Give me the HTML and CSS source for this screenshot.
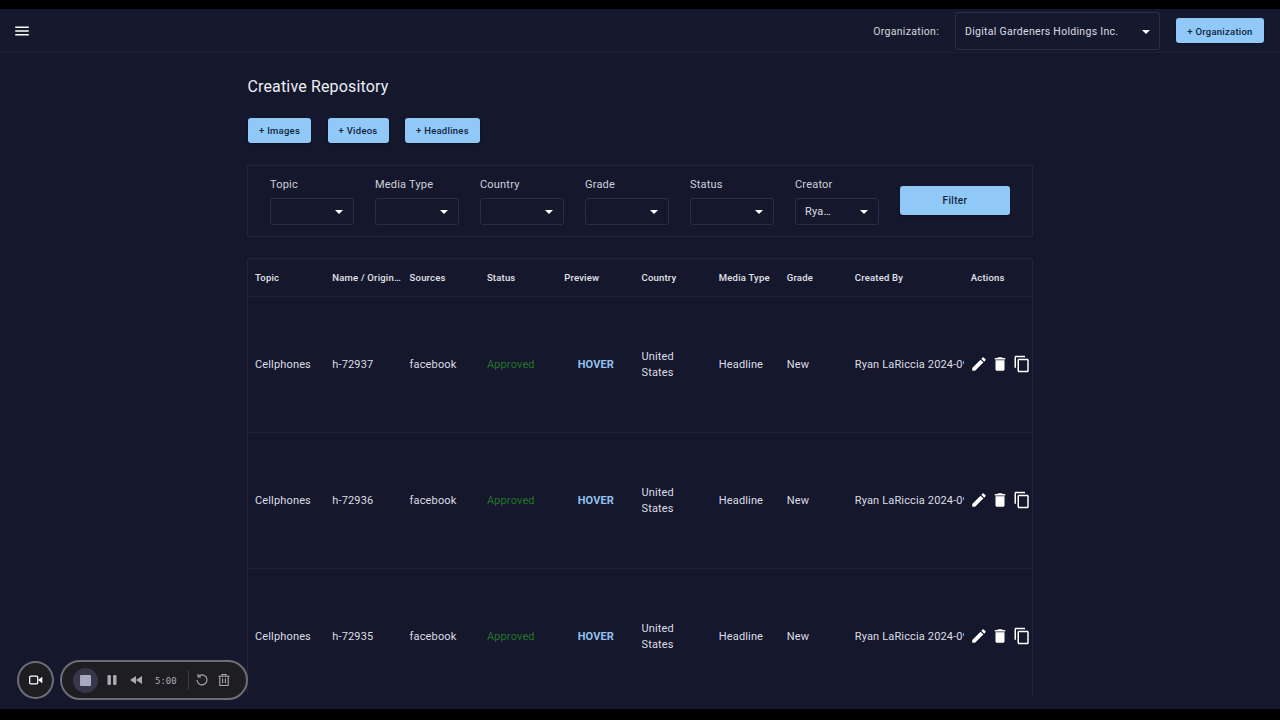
FILE: index.html
```html
<!DOCTYPE html>
<html lang="en">
<head>
<meta charset="utf-8">
<title>Creative Repository</title>
<link rel="stylesheet" href="styles.css">
</head>
<body>
<div class="screen">
  <header class="topbar">
    <svg class="menu-icon" viewBox="0 0 24 24" width="18" height="18"><path d="M3 18h18v-2H3v2zm0-5h18v-2H3v2zm0-7v2h18V6H3z"/></svg>
    <div class="org">
      <span class="org-label">Organization:</span>
      <div class="org-select"><span>Digital Gardeners Holdings Inc.</span><i class="caret"></i></div>
      <button class="btn btn-org">+ Organization</button>
    </div>
  </header>
  <main class="content">
    <h1 class="title">Creative Repository</h1>
    <div class="actions-row">
      <button class="btn btn-add">+ Images</button>
      <button class="btn btn-add">+ Videos</button>
      <button class="btn btn-add">+ Headlines</button>
    </div>
    <section class="filters">
      <div class="field"><label>Topic</label><div class="select"><span></span><i class="caret"></i></div></div>
      <div class="field"><label>Media Type</label><div class="select"><span></span><i class="caret"></i></div></div>
      <div class="field"><label>Country</label><div class="select"><span></span><i class="caret"></i></div></div>
      <div class="field"><label>Grade</label><div class="select"><span></span><i class="caret"></i></div></div>
      <div class="field"><label>Status</label><div class="select"><span></span><i class="caret"></i></div></div>
      <div class="field"><label>Creator</label><div class="select"><span>Rya…</span><i class="caret"></i></div></div>
      <button class="btn btn-filter">Filter</button>
    </section>
    <section class="table-wrap">
      <table class="grid">
        <colgroup>
          <col class="c-std"><col class="c-std"><col class="c-std"><col class="c-std"><col class="c-std"><col class="c-std">
          <col class="c-mid"><col class="c-mid"><col class="c-wide"><col class="c-act">
        </colgroup>
        <thead>
          <tr><th>Topic</th><th>Name / Origin…</th><th>Sources</th><th>Status</th><th>Preview</th><th>Country</th><th>Media Type</th><th>Grade</th><th>Created By</th><th>Actions</th></tr>
        </thead>
        <tbody>
          <tr>
            <td>Cellphones</td><td>h-72937</td><td>facebook</td><td class="ok">Approved</td><td class="hover">HOVER</td><td>United States</td><td>Headline</td><td>New</td><td class="clip"><div>Ryan LaRiccia 2024-09-12</div></td>
            <td class="act"><div class="icons">
              <svg viewBox="0 0 24 24"><path d="M3 17.25V21h3.75L17.81 9.94l-3.75-3.75L3 17.25zM20.71 7.04a1 1 0 0 0 0-1.41l-2.34-2.34a1 1 0 0 0-1.41 0l-1.83 1.83 3.75 3.75 1.83-1.83z"/></svg>
              <svg viewBox="0 0 24 24"><path d="M6 19c0 1.1.9 2 2 2h8c1.1 0 2-.9 2-2V7H6v12zM19 4h-3.5l-1-1h-5l-1 1H5v2h14V4z"/></svg>
              <svg viewBox="0 0 24 24"><path d="M16 1H4c-1.1 0-2 .9-2 2v14h2V3h12V1zm3 4H8c-1.1 0-2 .9-2 2v14c0 1.1.9 2 2 2h11c1.1 0 2-.9 2-2V7c0-1.1-.9-2-2-2zm0 16H8V7h11v14z"/></svg>
            </div></td>
          </tr>
          <tr>
            <td>Cellphones</td><td>h-72936</td><td>facebook</td><td class="ok">Approved</td><td class="hover">HOVER</td><td>United States</td><td>Headline</td><td>New</td><td class="clip"><div>Ryan LaRiccia 2024-09-12</div></td>
            <td class="act"><div class="icons">
              <svg viewBox="0 0 24 24"><path d="M3 17.25V21h3.75L17.81 9.94l-3.75-3.75L3 17.25zM20.71 7.04a1 1 0 0 0 0-1.41l-2.34-2.34a1 1 0 0 0-1.41 0l-1.83 1.83 3.75 3.75 1.83-1.83z"/></svg>
              <svg viewBox="0 0 24 24"><path d="M6 19c0 1.1.9 2 2 2h8c1.1 0 2-.9 2-2V7H6v12zM19 4h-3.5l-1-1h-5l-1 1H5v2h14V4z"/></svg>
              <svg viewBox="0 0 24 24"><path d="M16 1H4c-1.1 0-2 .9-2 2v14h2V3h12V1zm3 4H8c-1.1 0-2 .9-2 2v14c0 1.1.9 2 2 2h11c1.1 0 2-.9 2-2V7c0-1.1-.9-2-2-2zm0 16H8V7h11v14z"/></svg>
            </div></td>
          </tr>
          <tr>
            <td>Cellphones</td><td>h-72935</td><td>facebook</td><td class="ok">Approved</td><td class="hover">HOVER</td><td>United States</td><td>Headline</td><td>New</td><td class="clip"><div>Ryan LaRiccia 2024-09-12</div></td>
            <td class="act"><div class="icons">
              <svg viewBox="0 0 24 24"><path d="M3 17.25V21h3.75L17.81 9.94l-3.75-3.75L3 17.25zM20.71 7.04a1 1 0 0 0 0-1.41l-2.34-2.34a1 1 0 0 0-1.41 0l-1.83 1.83 3.75 3.75 1.83-1.83z"/></svg>
              <svg viewBox="0 0 24 24"><path d="M6 19c0 1.1.9 2 2 2h8c1.1 0 2-.9 2-2V7H6v12zM19 4h-3.5l-1-1h-5l-1 1H5v2h14V4z"/></svg>
              <svg viewBox="0 0 24 24"><path d="M16 1H4c-1.1 0-2 .9-2 2v14h2V3h12V1zm3 4H8c-1.1 0-2 .9-2 2v14c0 1.1.9 2 2 2h11c1.1 0 2-.9 2-2V7c0-1.1-.9-2-2-2zm0 16H8V7h11v14z"/></svg>
            </div></td>
          </tr>
        </tbody>
      </table>
    </section>
  </main>
  <div class="recorder">
    <div class="cam">
      <svg viewBox="0 0 20 14" width="14" height="10"><rect x="1" y="1.5" width="11.5" height="11" rx="1.5" fill="none" stroke="#fff" stroke-width="1.8"/><path d="M13 7l6-4.5v9z" fill="#fff"/></svg>
    </div>
    <div class="pill">
      <div class="stop"><span></span></div>
      <svg class="rec-i" viewBox="0 0 12 12" width="12" height="12"><rect x="1.5" y="1" width="3.4" height="10" rx="1.2"/><rect x="7.1" y="1" width="3.4" height="10" rx="1.2"/></svg>
      <svg class="rec-i rew" viewBox="0 0 14 12" width="14" height="12"><path d="M7 2v8L1 6zM13 2v8L7 6z"/></svg>
      <span class="time">5:00</span>
      <span class="sep"></span>
      <svg class="rec-o" viewBox="0 0 14 14" width="14" height="14"><path d="M3.2 3.6A5 5 0 1 1 2 7"/><path d="M3 1v3h3"/></svg>
      <svg class="rec-o" viewBox="0 0 14 14" width="14" height="14"><path d="M1.5 3.2h11M5 3V1.5h4V3M2.8 3.2v9.3h8.4V3.2M5.6 5.5v4.8M8.4 5.5v4.8"/></svg>
    </div>
  </div>
</div>
</body>
</html>
```

FILE: styles.css
```css
* { box-sizing: border-box; }
html, body { margin: 0; height: 100%; background: #000; overflow: hidden; }
body { padding: 9px 0 11px; font-family: Roboto, "Liberation Sans", sans-serif; color: #e8e9ee; }
.screen { position: relative; height: 700px; background: #15182d; display: flex; flex-direction: column; overflow: hidden; }

.topbar { height: 44px; flex: none; display: flex; align-items: center; justify-content: space-between; padding: 0 16px 0 13px; border-bottom: 1px solid #1c2034; background: #15192e; }
.menu-icon { fill: #fff; }
.org { display: flex; align-items: center; }
.org-label { font-size: 10.5px; letter-spacing: .3px; color: #d5d6dd; margin-right: 16px; padding-top: 2px; }
.org-select { width: 205px; height: 38px; border: 1px solid #2a2e44; border-radius: 3px; display: flex; align-items: center; justify-content: space-between; padding: 2px 9px 0; font-size: 10.5px; letter-spacing: .3px; color: #dcdde3; margin-right: 16px; }
.caret { display: block; width: 0; height: 0; border-left: 4px solid transparent; border-right: 4px solid transparent; border-top: 4px solid #fff; }

.btn { border: 0; border-radius: 3px; background: #90c8f8; color: #12233c; font-family: inherit; font-weight: 500; font-size: 9.5px; letter-spacing: .25px; padding: 0; box-shadow: 0 1px 2px rgba(0,0,0,.4); }
.btn-org { width: 88px; height: 25px; padding-top: 1px; }

.content { flex: 1; min-height: 0; display: flex; flex-direction: column; width: 786px; margin-left: 247px; }
.title { margin: 24px 0 0 .5px; font-size: 16px; line-height: 20px; font-weight: 400; letter-spacing: .15px; color: #eceef3; }
.actions-row { display: flex; gap: 16.5px; margin-top: 21px; margin-left: 1px; }
.btn-add { height: 25px; padding: 0 11px; }

.filters { margin-top: 22px; height: 72px; flex: none; border: 1px solid #22263b; display: flex; padding: 0 22px; gap: 21px; }
.field { width: 84px; padding-top: 12px; }
.field label { display: block; font-size: 11px; line-height: 14px; letter-spacing: .2px; color: #cfd0d9; margin-bottom: 6px; }
.select { height: 27px; border: 1px solid #2a2e44; border-radius: 3px; display: flex; align-items: center; justify-content: space-between; padding: 0 10px 0 9px; font-size: 11px; letter-spacing: .2px; color: #dcdde3; }
.btn-filter { width: 110px; height: 29px; align-self: flex-start; margin-top: 20px; font-size: 10px; letter-spacing: .35px; }

.table-wrap { margin-top: 21px; flex: 1; min-height: 0; overflow: hidden; border: 1px solid #22263b; border-bottom: 0; border-radius: 3px 3px 0 0; margin-bottom: 14px; }
.grid { width: 784px; border-collapse: collapse; table-layout: fixed; }
.c-std { width: 77.3px; }
.c-mid { width: 68px; }
.c-wide { width: 116px; }
.grid th { height: 37px; padding: 1px 7px 0; text-align: left; font-size: 9.5px; font-weight: 500; letter-spacing: .2px; color: #e2e3ea; border-bottom: 1px solid #1f2338; white-space: nowrap; overflow: hidden; }
.grid td { height: 136px; padding: 1px 7px 0; font-size: 11px; line-height: 16px; letter-spacing: .15px; color: #dcdde4; border-bottom: 1px solid #1f2338; }
.grid td.ok { color: #217329; }
.grid td.hover { color: #90c0ee; font-weight: 700; text-align: center; }
.grid td.clip { padding-right: 0; }
.clip div { white-space: nowrap; overflow: hidden; }
.grid td.act { padding: 0; }
.icons { display: flex; gap: 3.5px; padding-left: 6px; }
.icons svg { width: 18px; height: 18px; fill: #fff; flex: none; }

.recorder { position: absolute; left: 17px; top: 651px; display: flex; align-items: center; gap: 6px; }
.cam { width: 37px; height: 38px; border-radius: 50%; border: 2.5px solid #6d6d78; background: #1e1e22; display: flex; align-items: center; justify-content: center; }
.pill { width: 188px; height: 40px; border-radius: 20px; border: 2.5px solid #6d6d78; background: #1e1e22; display: flex; align-items: center; padding-left: 11px; }
.stop { width: 25px; height: 25px; border-radius: 50%; background: #38374a; display: flex; align-items: center; justify-content: center; margin-right: 8px; }
.stop span { width: 11px; height: 11px; border-radius: 1px; background: #a9a8c0; }
.rec-i { fill: #a9a9b4; }
.rew { margin-left: 11px; }
.time { font-family: "DejaVu Sans Mono", monospace; font-size: 9px; color: #a9a9b4; margin-left: 12px; padding-top: 1px; }
.sep { width: 1px; height: 20px; background: #3a3a40; margin: 0 6px 0 11px; }
.rec-o { fill: none; stroke: #a9a9b4; stroke-width: 1.1; margin-right: 8.5px; }
```
